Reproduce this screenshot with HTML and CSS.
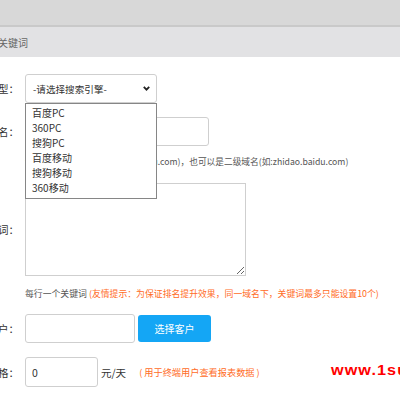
FILE: index.html
```html
<!DOCTYPE html>
<html lang="zh-CN">
<head>
<meta charset="utf-8">
<title>添加关键词</title>
<link rel="stylesheet" href="styles.css">
</head>
<body>
<div class="top"></div>
<div class="sub"><span>添加关键词</span></div>
<div class="form">
  <div class="row">
    <div class="label">搜索引擎类型：</div>
    <div class="select-wrap">
      <div class="select">
        <span>-请选择搜索引擎-</span>
        <svg class="chev" width="7" height="5" viewBox="0 0 7 5"><polyline points="0.8,0.8 3.5,3.6 6.2,0.8" fill="none" stroke="#222" stroke-width="1.8"/></svg>
      </div>
      <ul class="menu">
        <li>百度PC</li>
        <li>360PC</li>
        <li>搜狗PC</li>
        <li>百度移动</li>
        <li>搜狗移动</li>
        <li>360移动</li>
      </ul>
    </div>
  </div>
  <div class="row r2">
    <div class="label">网站域名：</div>
    <input class="input domain" type="text">
  </div>
  <div class="hint h1">请填写您网站的顶级域名(如:baidu.com)，也可以是二级域名(如:zhidao.baidu.com)</div>
  <div class="row r3">
    <div class="label">关键词：</div>
    <textarea class="area"></textarea>
  </div>
  <div class="hint h2">每行一个关键词 <span class="warn">(友情提示：为保证排名提升效果，同一域名下，关键词最多只能设置10个)</span></div>
  <div class="row r4">
    <div class="label">选择客户：</div>
    <input class="input client" type="text">
    <button class="btn" type="button">选择客户</button>
  </div>
  <div class="row r5">
    <div class="label">价格：</div>
    <input class="input price" type="text" value="0">
    <span class="unit">元/天</span>
    <span class="warn note">( 用于终端用户查看报表数据 )</span>
  </div>
</div>
<div class="mark">www.1su</div>
</body>
</html>
```
FILE: styles.css
```css
html, body {
  margin: 0;
  padding: 0;
  background: #fff;
  overflow: hidden;
}
body {
  font-family: "Noto Sans CJK SC", "Noto Sans", sans-serif;
  color: #333;
  width: 400px;
  height: 400px;
  position: relative;
}
.top {
  height: 25px;
  background: #d8d8d8;
  border-bottom: 2px solid #c9c9c9;
}
.sub {
  height: 30px;
  background: #e2e2e4;
  display: flex;
  align-items: center;
  font-size: 10px;
  color: #666;
}
.sub span {
  margin-left: -22px;
}
.form {
  display: flex;
  flex-direction: column;
  margin-left: -79px;
  padding-top: 17px;
}
.row {
  display: flex;
  align-items: center;
}
.label {
  width: 104px;
  box-sizing: border-box;
  padding-right: 6px;
  text-align: right;
  font-size: 10.5px;
  flex: none;
  white-space: nowrap;
  color: #333;
}
.select-wrap {
  position: relative;
  width: 132px;
}
.select {
  box-sizing: border-box;
  height: 29px;
  border: 1px solid #cfcfcf;
  border-radius: 3px;
  display: flex;
  align-items: center;
  justify-content: space-between;
  padding: 0 6px 0 7px;
  font-size: 9.6px;
  color: #333;
}
.menu {
  position: absolute;
  left: 0;
  top: 29px;
  width: 132px;
  box-sizing: border-box;
  margin: 0;
  padding: 1px 0 3px;
  list-style: none;
  background: #fff;
  border: 1px solid #868686;
  z-index: 2;
}
.menu li {
  height: 15px;
  line-height: 15px;
  padding-left: 6px;
  font-size: 10px;
  color: #333;
}
.input {
  box-sizing: border-box;
  height: 29px;
  border: 1px solid #cfcfcf;
  border-radius: 3px;
  padding: 0 6px;
  font-family: inherit;
  font-size: 10.5px;
  color: #333;
  outline: none;
  background: #fff;
}
.r2 { margin-top: 14px; }
.domain { width: 184px; }
.hint {
  margin-left: 104px;
  line-height: 14px;
  white-space: nowrap;
  color: #555;
}
.h1 {
  margin-top: 9px;
  font-size: 8.7px;
}
.r3 { margin-top: 14px; }
.area {
  box-sizing: border-box;
  width: 221px;
  height: 93px;
  border: 1px solid #cfcfcf;
  margin: 0;
  padding: 4px;
  resize: both;
  outline: none;
}
.h2 {
  margin-top: 11px;
  font-size: 8.85px;
}
.warn {
  color: #ff6c1f;
}
.r4 { margin-top: 13px; }
.client { width: 110px; }
.btn {
  margin-left: 3px;
  width: 73px;
  height: 27px;
  border: none;
  border-radius: 3px;
  background: #14a6f5;
  color: #fff;
  font-family: inherit;
  font-size: 10px;
  padding: 0;
}
.r5 { margin-top: 14px; }
.price {
  width: 73px;
  height: 30px;
}
.unit {
  margin-left: 3px;
  font-size: 10.5px;
  color: #333;
}
.note {
  margin-left: 13px;
  font-size: 9.2px;
}
.mark {
  position: absolute;
  left: 331px;
  top: 361px;
  font-family: "Liberation Sans", Arial, sans-serif;
  font-weight: bold;
  font-size: 15px;
  color: #f00;
  letter-spacing: 1px;
  white-space: nowrap;
  transform: scaleX(1.08);
  transform-origin: left center;
}
```
